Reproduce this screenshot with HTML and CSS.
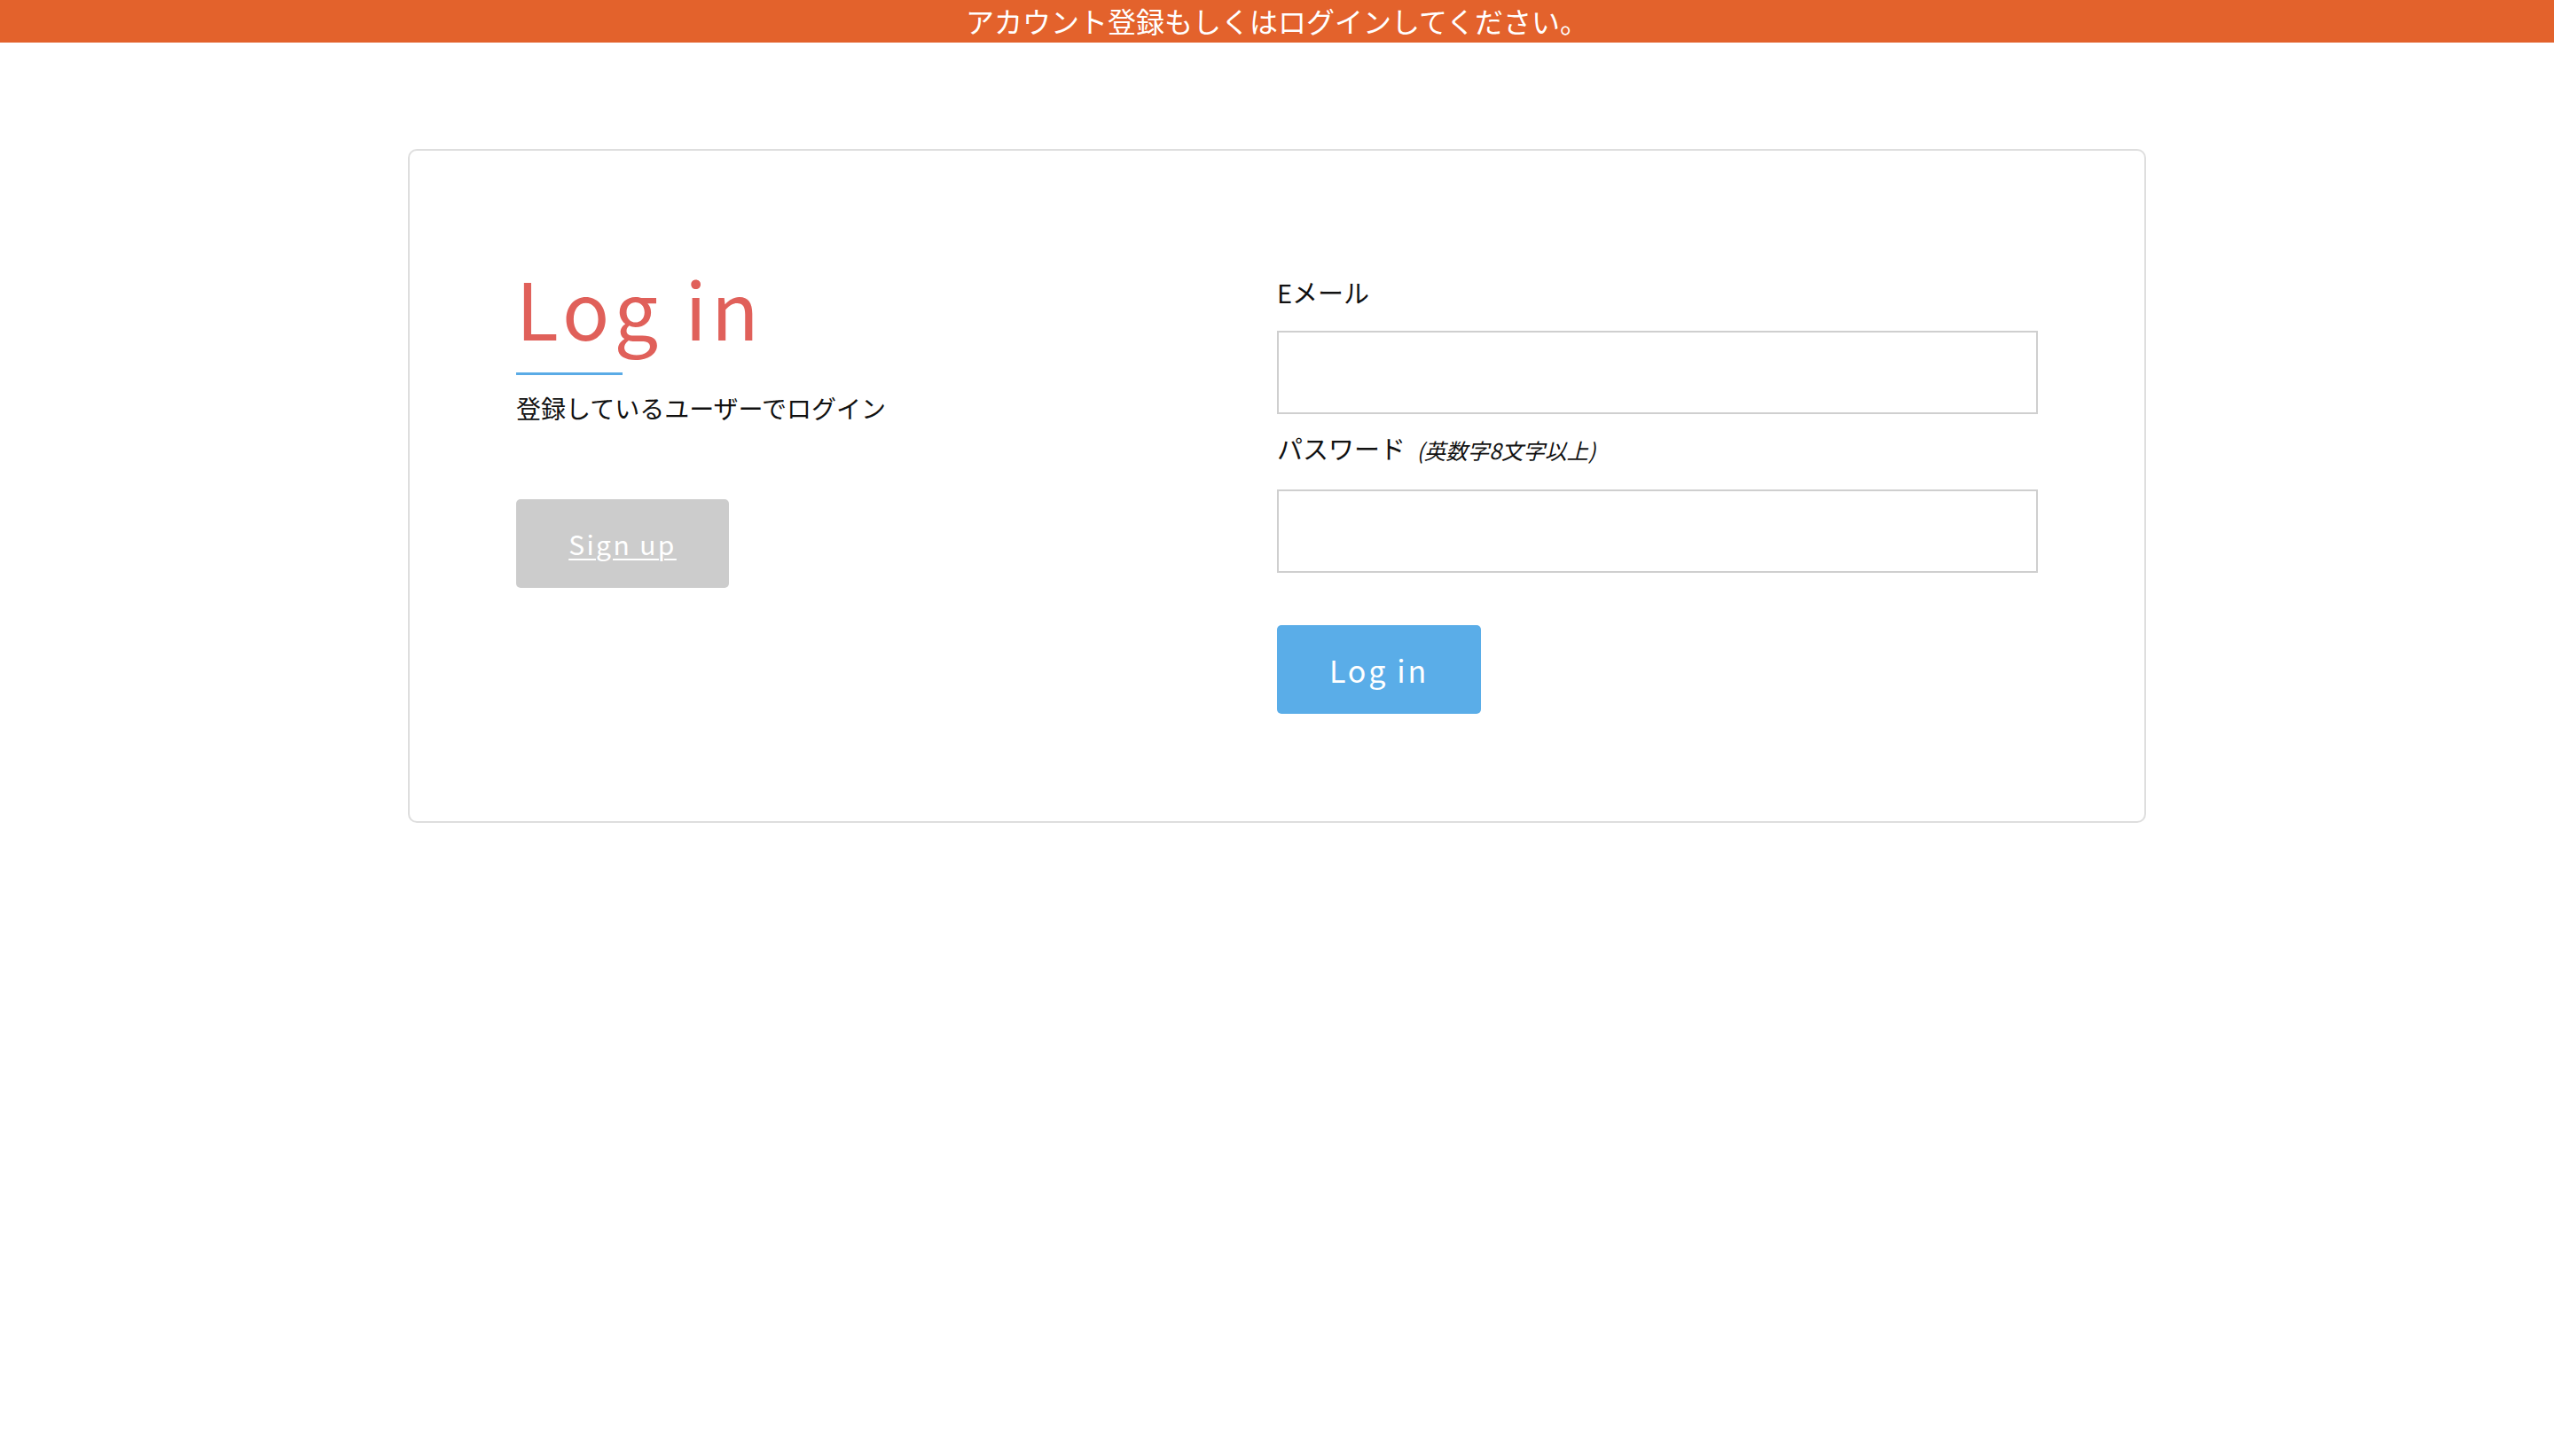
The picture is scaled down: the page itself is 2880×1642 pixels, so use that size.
FILE: index.html
```html
<!DOCTYPE html>
<html lang="ja">
<head>
<meta charset="utf-8">
<title>Log in</title>
<link rel="stylesheet" href="styles.css">
</head>
<body>
<div class="notice">アカウント登録もしくはログインしてください。</div>
<main class="page">
  <section class="card">
    <div class="intro">
      <h1 class="title">Log in</h1>
      <div class="title-rule"></div>
      <p class="lead">登録しているユーザーでログイン</p>
      <a class="btn btn-signup" href="#">Sign up</a>
    </div>
    <form class="form">
      <label class="label" for="email">Eメール</label>
      <input class="field" id="email" type="email">
      <label class="label" for="password">パスワード <em class="hint">(英数字8文字以上)</em></label>
      <input class="field" id="password" type="password">
      <button class="btn btn-login" type="button">Log in</button>
    </form>
  </section>
</main>
</body>
</html>
```
FILE: styles.css
```css
* { box-sizing: border-box; }
html, body {
  margin: 0;
  padding: 0;
  background: #fff;
  font-family: "Noto Sans CJK JP", "Noto Sans", sans-serif;
  color: #111;
}
.notice {
  height: 48px;
  background: #e3622c;
  color: #fff;
  font-size: 32px;
  line-height: 46px;
  text-align: center;
}
.page {
  display: flex;
  justify-content: center;
  padding-top: 120px;
}
.card {
  width: 1960px;
  border: 2px solid #dedede;
  border-radius: 10px;
  padding: 120px 120px 121px;
  display: grid;
  grid-template-columns: 1fr 1fr;
}
.intro {
  display: flex;
  flex-direction: column;
  align-items: flex-start;
}
.title {
  margin: 12px 0 0;
  font-size: 88px;
  line-height: 88px;
  font-weight: 400;
  color: #e0605a;
  letter-spacing: 0.06em;
}
.title-rule {
  width: 120px;
  height: 3px;
  background: #5aabe6;
  margin-top: 30px;
}
.lead {
  margin: 16px 0 0;
  font-size: 28px;
  line-height: 42px;
}
.btn {
  display: inline-flex;
  align-items: center;
  justify-content: center;
  height: 100px;
  border: 0;
  border-radius: 5px;
  color: #fff;
  font-family: "Noto Sans CJK JP", "Noto Sans", sans-serif;
  letter-spacing: 0.08em;
}
.btn-signup {
  margin-top: 82px;
  width: 240px;
  background: #cccccc;
  font-size: 30px;
  text-decoration: underline;
  text-underline-offset: 4px;
  text-decoration-thickness: 2px;
}
.form {
  display: flex;
  flex-direction: column;
  align-items: flex-start;
  padding-top: 18px;
}
.label {
  font-size: 29px;
  line-height: 42px;
  margin-bottom: 23px;
}
.hint {
  font-size: 24.5px;
  font-style: italic;
  margin-left: 6px;
}
.field {
  width: 858px;
  height: 94px;
  border: 2px solid #cfcfcf;
  border-radius: 0;
  background: #fff;
  margin: 0 0 17px;
  font-size: 28px;
  padding: 0 16px;
}
.btn-login {
  margin-top: 42px;
  width: 230px;
  background: #5aade8;
  font-size: 34px;
  cursor: pointer;
}
```
